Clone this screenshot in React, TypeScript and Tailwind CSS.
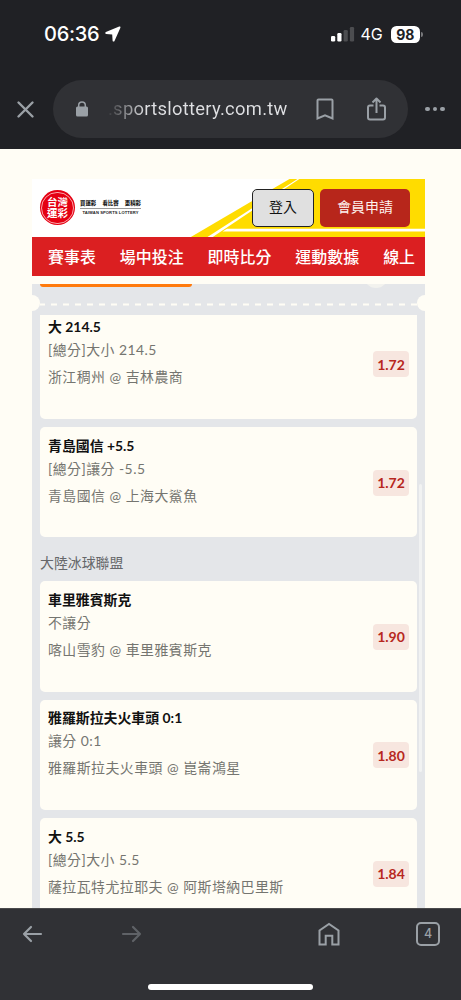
import { ReactNode } from "react";

const navItems = ["賽事表", "場中投注", "即時比分", "運動數據", "線上"];

const basketball = [
  { title: "大 214.5", market: "[總分]大小 214.5", match: "浙江稠州 @ 吉林農商", odds: "1.72" },
  { title: "青島國信 +5.5", market: "[總分]讓分 -5.5", match: "青島國信 @ 上海大鯊魚", odds: "1.72" },
];

const hockey = [
  { title: "車里雅賓斯克", market: "不讓分", match: "喀山雪豹 @ 車里雅賓斯克", odds: "1.90" },
  { title: "雅羅斯拉夫火車頭 0:1", market: "讓分 0:1", match: "雅羅斯拉夫火車頭 @ 崑崙鴻星", odds: "1.80" },
  { title: "大 5.5", market: "[總分]大小 5.5", match: "薩拉瓦特尤拉耶夫 @ 阿斯塔納巴里斯", odds: "1.84" },
];

type Bet = (typeof hockey)[number];

function BetCard({ bet }: { bet: Bet }) {
  return (
    <div className="flex h-[110.4px] shrink-0 justify-between rounded-[5px] bg-[#fffdf5] px-2 pt-[8.5px]">
      <div className="whitespace-nowrap text-[13.9px] text-[#757570]">
        <p className="h-[20px] font-bold leading-[20px] text-[#111]">{bet.title}</p>
        <p className="mt-[3px] h-[20px] leading-[20px] tracking-[0.48px]">{bet.market}</p>
        <p className="mt-[7px] h-[20px] leading-[20px] tracking-[0.48px]">{bet.match}</p>
      </div>
      <div className="mt-[34px] flex h-[26px] w-[36px] items-center justify-center rounded-[4px] bg-[#f7e6df] text-[14px] font-bold text-[#b7281e]">
        {bet.odds}
      </div>
    </div>
  );
}

function StatusBar() {
  return (
    <div className="flex h-[80px] items-start justify-between pl-[44px] pr-[38px] pt-[22px] font-['Inter',sans-serif] text-white">
      <div className="flex h-6 items-center gap-[6px]">
        <span className="text-[20px] font-medium tracking-[-0.25px]">06:36</span>
        <svg width="16" height="16" viewBox="0 0 16 16" fill="#fff">
          <path d="M14.2.6.9 6.100c-.9.4-.8 1.900.3 2l6 .3.4 6.300c.1 1.100 1.500 1.200 1.900.3L15.400 1.700c.3-.8-.4-1.400-1.200-1.100Z" />
        </svg>
      </div>
      <div className="flex h-6 items-center">
        <svg width="24" height="16" viewBox="0 0 24 16" fill="#fff">
          <rect x="0" y="10" width="4.200" height="5.500" rx="1.200" />
          <rect x="6.300" y="7" width="4.200" height="8.500" rx="1.200" />
          <rect x="12.600" y="4" width="4.200" height="11.500" rx="1.200" fill="#4c4d50" />
          <rect x="18.900" y="1" width="4.200" height="14.500" rx="1.200" fill="#4c4d50" />
        </svg>
        <span className="ml-[6px] w-[24px] text-[16px]">4G</span>
        <span className="ml-[6px] flex h-[17px] w-[29.500px] items-center justify-center rounded-[5.500px] bg-white text-[14px] font-bold text-[#202125]">
          98
        </span>
        <span className="ml-px h-[5px] w-[2px] rounded-r-full bg-[#77787b]" />
      </div>
    </div>
  );
}

function AddressBar() {
  return (
    <div className="flex h-[58px] items-center">
      <svg className="ml-[16px] mr-[18px]" width="19" height="19" viewBox="0 0 19 19" stroke="#9aa0a6" strokeWidth="2.400" strokeLinecap="round">
        <path d="m2.500 2.500 14 14m0-14-14 14" />
      </svg>
      <div className="flex h-[58px] w-[355px] items-center rounded-full bg-[#303135]">
        <svg className="ml-[23px] shrink-0" width="12" height="16" viewBox="0 0 12 16">
          <rect y="5.500" width="12" height="10" rx="1.500" fill="#9aa0a6" />
          <path d="M2.700 6V4.200a3.300 3.300 0 0 1 6.600 0V6" fill="none" stroke="#9aa0a6" strokeWidth="1.500" />
        </svg>
        <span className="ml-[20px] w-[181px] whitespace-nowrap bg-[linear-gradient(90deg,#3a3b3f_0px,#dfe0e3_38px)] bg-clip-text font-['Roboto',sans-serif] text-[18.400px] tracking-[0.27px] text-transparent">
          .sportslottery.com.tw
        </span>
        <svg className="ml-[27px] shrink-0" width="18" height="23" viewBox="0 0 18 23" fill="none" stroke="#9aa0a6" strokeWidth="2">
          <path d="M1.500 20.500V2.500a1 1 0 0 1 1-1h13a1 1 0 0 1 1 1v18L9 17.300Z" />
        </svg>
        <svg className="ml-[33px] shrink-0" width="19" height="24" viewBox="0 0 19 24" fill="none" stroke="#9aa0a6" strokeWidth="2" strokeLinejoin="round">
          <path d="M6.500 8.500H3a2 2 0 0 0-2 2v10a2 2 0 0 0 2 2h13a2 2 0 0 0 2-2v-10a2 2 0 0 0-2-2h-3.500M9.500 16V2M5.500 5.500l4-4 4 4" />
        </svg>
      </div>
      <div className="ml-[17px] flex gap-[3px]">
        <span className="size-[4.600px] rounded-full bg-[#9aa0a6]" />
        <span className="size-[4.600px] rounded-full bg-[#9aa0a6]" />
        <span className="size-[4.600px] rounded-full bg-[#9aa0a6]" />
      </div>
    </div>
  );
}

function Logo() {
  return (
    <div className="flex items-center">
      <div className="flex size-[35px] items-center justify-center rounded-full bg-[#e50012]">
        <div className="flex size-[32.500px] flex-col items-center justify-center rounded-full border-[0.5px] border-[#f9a6ab] text-[10.500px] font-bold leading-[10.500px] text-white">
          <span>台灣</span>
          <span>運彩</span>
        </div>
      </div>
      <div className="ml-[5px] w-[61px] text-[#222]">
        <div className="flex h-[10px] justify-between whitespace-nowrap border-b border-[#999] text-[5.400px] font-black leading-[8px]">
          <span>買運彩</span>
          <span>看比賽</span>
          <span>更精彩</span>
        </div>
        <p className="whitespace-nowrap text-center font-['Liberation_Sans',sans-serif] text-[4.100px] font-bold leading-[8px] tracking-[0.1px]">
          TAIWAN SPORTS LOTTERY
        </p>
      </div>
    </div>
  );
}

function SiteHeader() {
  return (
    <header className="mt-[29.500px]">
      <div className="relative flex h-[58.500px] items-center justify-between bg-white pl-2 pr-[15px]">
        <svg className="absolute right-0 top-0" width="235" height="58.500" viewBox="0 0 235 58.500">
          <path d="M0 58.500 99.500 0H235v58.500Z" fill="#ffdc00" />
          <path d="M16.700 58.500 107.500 0h1.800L22 58.500Z" fill="#fff" />
          <path d="M32.500 52.400 37 49.700H235v2.700Z" fill="#fff" />
        </svg>
        <Logo />
        <div className="relative flex gap-[6px] text-[13.900px]">
          <button className="h-[38.500px] w-[62px] rounded-[5px] border border-[#222] bg-[#e0e0e0] text-[#111]">
            登入
          </button>
          <button className="h-[38.500px] w-[90px] rounded-[5px] bg-[#b7261b] text-[#fdf3ef]">
            會員申請
          </button>
        </div>
      </div>
      <nav className="flex h-[39px] items-center gap-6 whitespace-nowrap bg-[#db1f21] pl-4 text-[15.950px] font-medium text-white">
        {navItems.map((item) => (
          <span key={item} className="shrink-0">
            {item}
          </span>
        ))}
      </nav>
    </header>
  );
}

function Ticket({ children }: { children: ReactNode }) {
  return (
    <section className="relative mt-2 flex min-h-0 flex-1 flex-col overflow-hidden bg-[#e4e6e9]">
      <div className="relative h-[31px] shrink-0">
        <div className="ml-2 h-[3px] w-[152px] rounded-b-[3px] bg-[#ff7a0c]" />
        <span className="absolute right-[37px] -top-[20px] size-6 rounded-full bg-[#f2f2ee]" />
        <span className="absolute -left-2 top-[11px] size-4 rounded-full bg-[#fffdf5]" />
        <span className="absolute -right-2 top-[11px] size-4 rounded-full bg-[#fffdf5]" />
        <svg className="absolute left-2 top-[18.500px]" width="377" height="3">
          <path d="M0 1.500h377" stroke="#fffdf5" strokeWidth="2" strokeDasharray="6 6" strokeDashoffset="1" />
        </svg>
      </div>
      <div className="min-h-0 flex-1 overflow-hidden px-2">
        <div className="-mt-[6.300px] flex flex-col gap-2">{children}</div>
      </div>
      <span className="absolute right-[3px] top-[200px] h-[288px] w-[3px] rounded-full bg-[#f1f2f2]" />
    </section>
  );
}

function Toolbar() {
  return (
    <footer className="h-[92px] shrink-0 border-t border-[#4a4a4b] bg-[#303135]">
      <div className="flex h-[50px] items-center text-[#9aa0a6]">
        <svg className="ml-[22px]" width="21" height="18" viewBox="0 0 21 18" fill="none" stroke="currentColor" strokeWidth="2.200" strokeLinecap="round" strokeLinejoin="round">
          <path d="M19 9H2m7-7L2 9l7 7" />
        </svg>
        <svg className="ml-[78px] text-[#5f6267]" width="21" height="18" viewBox="0 0 21 18" fill="none" stroke="currentColor" strokeWidth="2.200" strokeLinecap="round" strokeLinejoin="round">
          <path d="M2 9h17m-7-7 7 7-7 7" />
        </svg>
        <svg className="ml-[176px]" width="22" height="24" viewBox="0 0 22 24" fill="none" stroke="currentColor" strokeWidth="2">
          <path d="M1.500 22.500V8.500L11 2l9.500 6.500v14h-6.200v-8.800H7.700v8.800Z" />
        </svg>
        <div className="ml-[76px] flex size-[24px] items-center justify-center rounded-[5px] border-2 border-[#9aa0a6] font-['Inter',sans-serif] text-[12.500px] font-medium">
          4
        </div>
      </div>
      <div className="mx-auto mt-[25px] h-[6px] w-[165px] rounded-full bg-white" />
    </footer>
  );
}

export default function App() {
  return (
    <div className="flex h-[1000px] w-[461px] flex-col overflow-hidden bg-[#fffdf5] font-['Lato','Noto_Sans_CJK_TC',sans-serif]">
      <div className="h-[149px] shrink-0 bg-[#202125]">
        <StatusBar />
        <AddressBar />
      </div>
      <main className="ml-[32px] flex min-h-0 w-[393px] flex-1 flex-col">
        <SiteHeader />
        <Ticket>
          {basketball.map((bet) => (
            <BetCard key={bet.title} bet={bet} />
          ))}
          <h2 className="h-[28px] pt-[8px] text-[13.900px] leading-[20px] text-[#66676a]">大陸冰球聯盟</h2>
          {hockey.map((bet) => (
            <BetCard key={bet.title} bet={bet} />
          ))}
        </Ticket>
      </main>
      <Toolbar />
    </div>
  );
}
